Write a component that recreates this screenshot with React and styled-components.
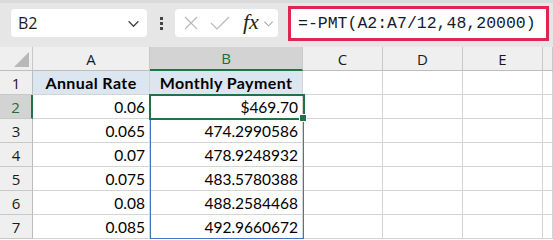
import React from "react";
import styled, { createGlobalStyle } from "styled-components";

const Global = createGlobalStyle`
  html, body { margin: 0; padding: 0; background: #fff; }
  body { width: 553px; height: 240px; overflow: hidden; }
  #root { width: 553px; height: 240px; }
`;

const Page = styled.div`
  width: 553px;
  height: 240px;
  display: flex;
  flex-direction: column;
  overflow: hidden;
  font-family: "Open Sans", "Noto Sans", sans-serif;
`;

const Toolbar = styled.div`
  height: 47px;
  box-sizing: border-box;
  background: #e6e6e6;
  border-top: 3px solid #dadada;
  display: flex;
  align-items: flex-start;
  padding-top: 6px;
  padding-left: 11px;
  flex-shrink: 0;
`;

const NameBox = styled.div`
  width: 136px;
  height: 28px;
  box-sizing: border-box;
  background: #fff;
  border-radius: 4px;
  display: flex;
  align-items: center;
  justify-content: space-between;
  padding: 0 7px 0 7px;
  font-size: 16px;
  color: #1a1a1a;
`;

const Dots = styled.div`
  width: 28px;
  height: 28px;
  display: flex;
  flex-direction: column;
  align-items: center;
  justify-content: center;
  gap: 2px;
  & > span {
    width: 3px;
    height: 3px;
    background: #444;
  }
`;

const FxBox = styled.div`
  width: 103px;
  height: 28px;
  box-sizing: border-box;
  background: #fff;
  border-radius: 4px;
  display: flex;
  align-items: center;
  padding-left: 8px;
`;

const Spacer = styled.span`
  width: ${(p) => p.$w}px;
  flex-shrink: 0;
`;

const FxLabel = styled.span`
  font-family: "Liberation Serif", "DejaVu Serif", serif;
  font-style: italic;
  font-size: 22px;
  color: #222;
  line-height: 1;
  margin-top: -2px;
`;

const FormulaBox = styled.div`
  margin-left: 10px;
  margin-top: -3px;
  width: 261px;
  height: 35px;
  box-sizing: border-box;
  background: #fff;
  border: 3px solid #e0264e;
  display: flex;
  align-items: center;
  padding-left: 7px;
  font-family: "Liberation Mono", "DejaVu Sans Mono", monospace;
  font-size: 16.5px;
  color: #141a2e;
  white-space: nowrap;
`;

const Grid = styled.div`
  display: grid;
  grid-template-columns: 33px 117px 153px 80px 80px 80px 10px;
  grid-template-rows: 24px repeat(7, 24px);
  font-family: "Lato", "Liberation Sans", sans-serif;
  font-size: 15.5px;
  color: #000;
  position: relative;
`;

const Corner = styled.div`
  background: #efefef;
  border-right: 1px solid #c8c8c8;
  border-bottom: 1px solid #bdbdbd;
  box-sizing: border-box;
  position: relative;
  &::after {
    content: "";
    position: absolute;
    right: 3px;
    bottom: 3px;
    width: 0;
    height: 0;
    border-left: 15px solid transparent;
    border-bottom: 15px solid #b8b8b8;
  }
`;

const ColHead = styled.div`
  box-sizing: border-box;
  background: ${(p) => (p.$sel ? "#d3d3d3" : "#efefef")};
  color: ${(p) => (p.$sel ? "#1e6b3e" : "#1a1a1a")};
  border-right: 1px solid #c8c8c8;
  border-bottom: ${(p) => (p.$sel ? "2px solid #217346" : "1px solid #bdbdbd")};
  display: flex;
  align-items: center;
  justify-content: center;
  font-family: "Open Sans", "Noto Sans", sans-serif;
  font-size: 15px;
`;

const RowHead = styled.div`
  box-sizing: border-box;
  background: ${(p) => (p.$sel ? "#d3d3d3" : "#efefef")};
  color: ${(p) => (p.$sel ? "#1e6b3e" : "#1a1a1a")};
  border-right: ${(p) => (p.$sel ? "2px solid #217346" : "1px solid #bdbdbd")};
  border-bottom: 1px solid #c8c8c8;
  display: flex;
  align-items: center;
  justify-content: center;
  font-family: "Open Sans", "Noto Sans", sans-serif;
  font-size: 15px;
`;

const Cell = styled.div`
  box-sizing: border-box;
  background: ${(p) => (p.$head ? "#dce6f1" : "#fff")};
  border-right: 1px solid #d4d4d4;
  border-bottom: 1px solid #d4d4d4;
  display: flex;
  align-items: center;
  justify-content: ${(p) => (p.$head ? "center" : "flex-end")};
  padding-right: ${(p) => (p.$head ? "0" : "4px")};
  font-weight: ${(p) => (p.$head ? 700 : 400)};
  font-size: ${(p) => (p.$head ? "16px" : "15.5px")};
  letter-spacing: ${(p) => (p.$head ? "0.4px" : "0")};
  white-space: nowrap;
`;

const RangeOutline = styled.div`
  position: absolute;
  left: 150px;
  top: 48px;
  width: 154px;
  height: 144px;
  box-sizing: border-box;
  border: 1px solid #4472c4;
  pointer-events: none;
`;

const Selection = styled.div`
  position: absolute;
  left: 149px;
  top: 47px;
  width: 156px;
  height: 26px;
  box-sizing: border-box;
  border: 2px solid #217346;
  pointer-events: none;
  &::after {
    content: "";
    position: absolute;
    right: -4px;
    bottom: -4px;
    width: 6px;
    height: 6px;
    background: #217346;
    border: 1px solid #fff;
  }
`;

const Chevron = ({ size = 12, color = "#555" }) => (
  <svg width={size} height={size} viewBox="0 0 12 12">
    <path d="M1.5 4 L6 8.5 L10.5 4" fill="none" stroke={color} strokeWidth="1.2" />
  </svg>
);

const cols = ["A", "B", "C", "D", "E"];
const data = [
  ["0.06", "$469.70"],
  ["0.065", "474.2990586"],
  ["0.07", "478.9248932"],
  ["0.075", "483.5780388"],
  ["0.08", "488.2584468"],
  ["0.085", "492.9660672"],
];

export default function App() {
  return (
    <Page>
      <Global />
      <Toolbar>
        <NameBox>
          <span>B2</span>
          <Chevron size={13} color="#444" />
        </NameBox>
        <Dots>
          <span />
          <span />
          <span />
        </Dots>
        <FxBox>
          <svg width="16" height="16" viewBox="0 0 16 16">
            <path d="M2 2 L14 14 M14 2 L2 14" stroke="#b8b8b8" strokeWidth="1.2" fill="none" />
          </svg>
          <Spacer $w={11} />
          <svg width="20" height="16" viewBox="0 0 20 16">
            <path d="M1 8 L7 14 L19 2" stroke="#b8b8b8" strokeWidth="1.2" fill="none" />
          </svg>
          <Spacer $w={13} />
          <FxLabel>fx</FxLabel>
          <Spacer $w={4} />
          <Chevron size={11} color="#aaa" />
        </FxBox>
        <FormulaBox>=-PMT(A2:A7/12,48,20000)</FormulaBox>
      </Toolbar>
      <Grid>
        <Corner />
        {cols.map((c) => (
          <ColHead key={c} $sel={c === "B"}>
            {c}
          </ColHead>
        ))}
        <ColHead />
        <RowHead>1</RowHead>
        <Cell $head>Annual Rate</Cell>
        <Cell $head>Monthly Payment</Cell>
        <Cell />
        <Cell />
        <Cell />
        <Cell />
        {data.map((r, i) => (
          <React.Fragment key={i}>
            <RowHead $sel={i === 0}>{i + 2}</RowHead>
            <Cell>{r[0]}</Cell>
            <Cell>{r[1]}</Cell>
            <Cell />
            <Cell />
            <Cell />
            <Cell />
          </React.Fragment>
        ))}
        <RangeOutline />
        <Selection />
      </Grid>
    </Page>
  );
}
